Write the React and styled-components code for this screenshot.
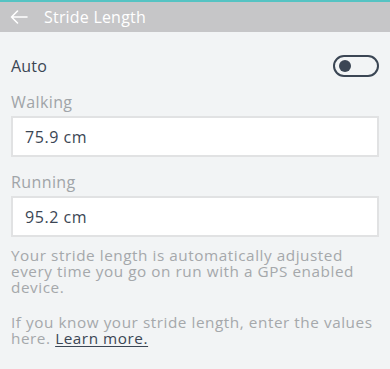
import styled, { createGlobalStyle } from "styled-components";

const GlobalStyle = createGlobalStyle`
  html, body {
    margin: 0;
    padding: 0;
    background: #f2f4f5;
  }
  body {
    font-family: "Open Sans", "Liberation Sans", sans-serif;
  }
`;

const Page = styled.div`
  width: 390px;
  min-height: 369px;
  background: #f2f4f5;
`;

const Header = styled.div`
  height: 30px;
  border-top: 2px solid #55c3c3;
  background: #c6c6c8;
  display: flex;
  align-items: center;
  padding-left: 10px;
  gap: 16px;
`;

const BackButton = styled.button`
  border: 0;
  background: none;
  padding: 0;
  display: flex;
  align-items: center;
`;

const Title = styled.div`
  font-size: 16px;
  color: #ffffff;
  letter-spacing: 0.2px;
`;

const Content = styled.div`
  padding: 0 11px;
`;

const Row = styled.div`
  display: flex;
  align-items: center;
  justify-content: space-between;
  height: 24px;
  margin-top: 22px;
`;

const RowLabel = styled.div`
  font-size: 16px;
  color: #3b4654;
  letter-spacing: 0.2px;
`;

const Toggle = styled.div`
  width: 46px;
  height: 22px;
  box-sizing: border-box;
  border: 2px solid #3b4654;
  border-radius: 11px;
  display: flex;
  align-items: center;
  padding-left: 4px;
`;

const Knob = styled.span`
  width: 12px;
  height: 12px;
  border-radius: 50%;
  background: #3b4654;
`;

const FieldLabel = styled.div`
  font-size: 16px;
  line-height: 22px;
  color: #a0a4a8;
  letter-spacing: 0.4px;
  margin-top: ${(p) => p.$top}px;
`;

const Input = styled.input`
  display: block;
  box-sizing: border-box;
  width: 368px;
  height: 41px;
  margin-top: 3px;
  border: 2px solid #e1e2e3;
  background: #ffffff;
  padding: 0 12px;
  font-family: "Open Sans", "Liberation Sans", sans-serif;
  font-size: 16px;
  letter-spacing: 0.55px;
  color: #3b4654;
  outline: none;
`;

const Note = styled.p`
  margin: ${(p) => p.$top}px 0 0;
  font-size: 15.3px;
  line-height: 16px;
  letter-spacing: 0.55px;
  color: #a5a8ab;
`;

const Link = styled.a`
  color: #3b4654;
  text-decoration: underline;
  text-decoration-thickness: 1px;
  text-underline-offset: 2px;
`;

function BackArrow() {
  return (
    <svg width="18" height="14" viewBox="0 0 18 14" fill="none">
      <path
        d="M17 7H1.5M7.5 1L1.5 7l6 6"
        stroke="#ffffff"
        strokeWidth="1.6"
        strokeLinecap="round"
        strokeLinejoin="round"
      />
    </svg>
  );
}

function App() {
  return (
    <Page>
      <GlobalStyle />
      <Header>
        <BackButton>
          <BackArrow />
        </BackButton>
        <Title>Stride Length</Title>
      </Header>
      <Content>
        <Row>
          <RowLabel>Auto</RowLabel>
          <Toggle>
            <Knob />
          </Toggle>
        </Row>
        <FieldLabel $top={13}>Walking</FieldLabel>
        <Input defaultValue="75.9 cm" />
        <FieldLabel $top={14}>Running</FieldLabel>
        <Input defaultValue="95.2 cm" />
        <Note $top={10}>
          Your stride length is automatically adjusted every time you go on run
          with a GPS enabled device.
        </Note>
        <Note $top={19}>
          If you know your stride length, enter the values here.{" "}
          <Link href="#">Learn more.</Link>
        </Note>
      </Content>
    </Page>
  );
}

export default App;
